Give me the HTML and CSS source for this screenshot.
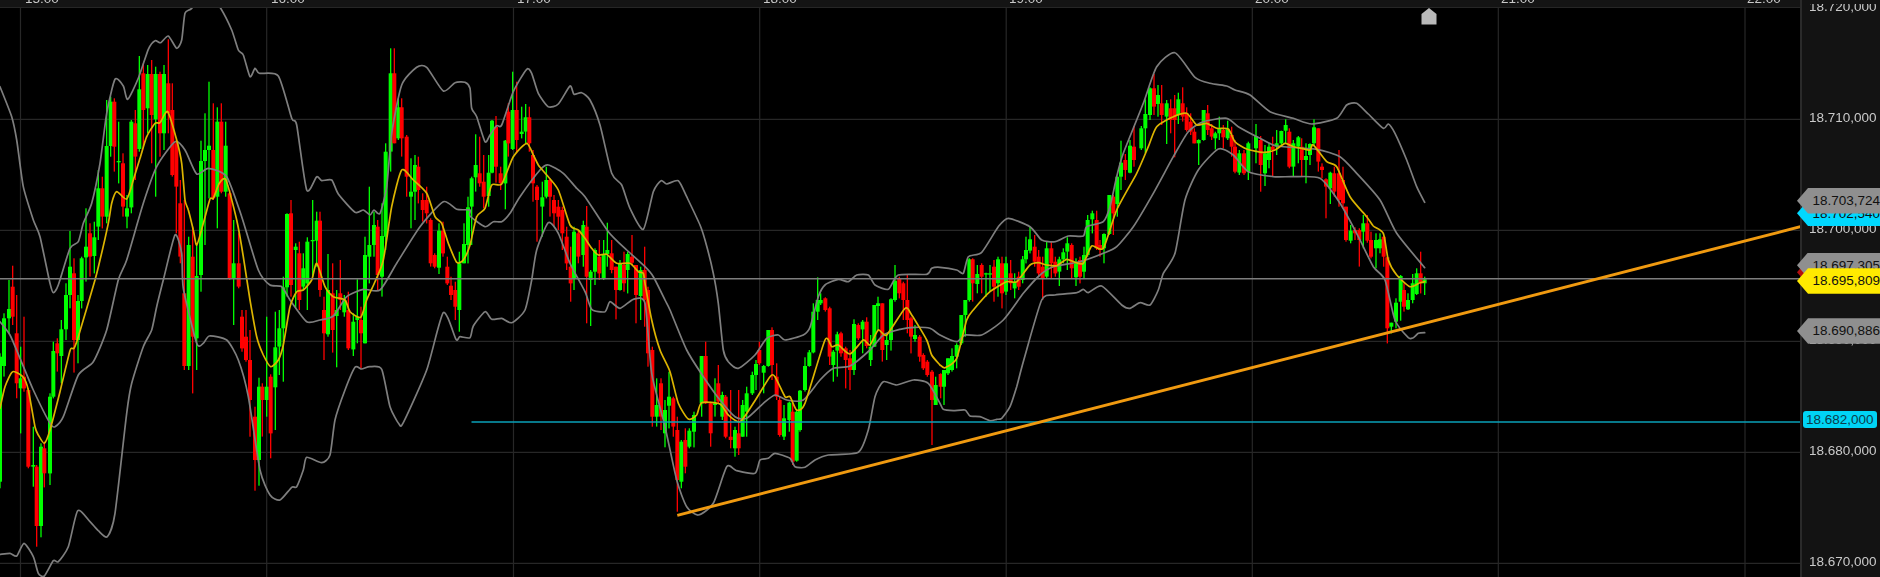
FILE: index.html
```html
<!DOCTYPE html>
<html lang="en">
<head>
<meta charset="utf-8">
<title>Chart</title>
<link rel="stylesheet" href="styles.css">
</head>
<body>
<main class="terminal">
  <section class="chart-pane">
    <div class="time-axis">
      <div class="time-row">
        <span class="time-label">15:00</span>
        <span class="time-label">16:00</span>
        <span class="time-label">17:00</span>
        <span class="time-label">18:00</span>
        <span class="time-label">19:00</span>
        <span class="time-label">20:00</span>
        <span class="time-label">21:00</span>
        <span class="time-label">22:00</span>
      </div>
    </div>
    <div class="plot">
      <svg id="chart" class="plot-svg" viewBox="0 8 1800 569" width="1800" height="569" aria-label="Candlestick chart"></svg>
      <svg class="session-marker" viewBox="0 0 16 17" width="16" height="17" aria-hidden="true"><path d="M8 0 L15.5 6 V16.5 H.5 V6 Z"/></svg>
    </div>
  </section>
  <aside class="price-axis">
    <div class="ticks">
      <div class="tick">18.720,000</div>
      <div class="tick">18.710,000</div>
      <div class="tick">18.700,000</div>
      <div class="tick">18.690,000</div>
      <div class="tick">18.680,000</div>
      <div class="tick">18.670,000</div>
    </div>
    <div class="axis-cap"></div>
    <div class="tag tag-red tag-at-red"></div>
    <div class="tag tag-cyan tag-at-cyan">18.702,540</div>
    <div class="tag tag-grey tag-at-a">18.703,724</div>
    <div class="tag tag-grey tag-at-b">18.697,305</div>
    <div class="tag tag-yellow tag-at-yellow">18.695,809</div>
    <div class="tag tag-grey tag-at-c">18.690,886</div>
    <div class="level-box">18.682,000</div>
  </aside>
</main>
<script src="chart.js"></script>
</body>
</html>
```
FILE: styles.css
```css
* { box-sizing: border-box; }
html, body { margin: 0; padding: 0; background: #000; }
body { width: 1880px; height: 577px; overflow: hidden; font-family: "Liberation Sans", Arial, sans-serif; }
.terminal { display: flex; width: 1880px; height: 577px; }
.chart-pane { width: 1800px; display: flex; flex-direction: column; }
.time-axis { height: 8px; background: #141414; border-bottom: 1px solid #262626; overflow: hidden; }
.time-row { display: flex; padding-left: 25px; margin-top: -9px; }
.time-label { flex: 0 0 246px; font-size: 13.5px; line-height: 15px; color: #c8c8c8; filter: blur(.35px); }
.plot { position: relative; flex: 1; background: #000; }
.plot-svg { display: block; filter: blur(.45px); }
.session-marker { position: absolute; left: 1420.5px; top: -.5px; fill: #b9b9b9; filter: blur(.35px); }
.price-axis { position: relative; width: 80px; background: #131313; border-left: 2px solid #2a2a2a; }
.ticks { display: flex; flex-direction: column; gap: 95px; padding-left: 7px; }
.tick { height: 16px; line-height: 14.5px; font-size: 13.5px; color: #cacaca; white-space: nowrap; filter: blur(.35px); }
.axis-cap { position: absolute; left: 0; right: 0; top: 0; height: 3.5px; background: #131313; }
.tag { position: absolute; left: -5px; width: 85px; height: 25.5px; line-height: 25.5px; padding-left: 15.5px; font-size: 13.5px; color: #111; white-space: nowrap; clip-path: polygon(0 50%, 11px 0, 100% 0, 100% 100%, 11px 100%); }
.tag-grey { background: #8f8f8f; }
.tag-cyan { background: #00d8ff; }
.tag-yellow { background: #ffea00; }
.tag-red { background: #b30f0f; }
.tag-at-red { top: 259.5px; }
.tag-at-cyan { top: 200.5px; }
.tag-at-a { top: 188px; }
.tag-at-b { top: 252.5px; }
.tag-at-yellow { top: 268.3px; }
.tag-at-c { top: 318.3px; }
.level-box { position: absolute; left: 1px; top: 410.7px; width: 73.5px; height: 17.6px; padding-left: 3px; line-height: 17.6px; font-size: 13.5px; color: #0b3d4c; background: #00d4f5; border-radius: 3px; white-space: nowrap; }
```
FILE: chart.js
```js
var NS = 'http://www.w3.org/2000/svg';
var svg = document.getElementById('chart');

function el(name, attrs) {
  var e = document.createElementNS(NS, name);
  for (var k in attrs) e.setAttribute(k, attrs[k]);
  svg.appendChild(e);
  return e;
}

/* Pixel traces: x offset, y offset (in 1/3 px), then x,y pairs in 1/3 px. */
function seg(dx, dy, a) {
  var out = [];
  for (var i = 0; i < a.length; i += 2) {
    out.push([dx + a[i] / 3, (a[i + 1] + dy) / 3]);
  }
  return out;
}
/* Smooth the traced points with a Catmull-Rom curve. */
function line(parts, colour, width) {
  var p = [];
  parts.forEach(function (s) { p = p.concat(seg(s[0], s[1], s[2])); });
  var d = 'M' + p[0][0].toFixed(1) + ' ' + p[0][1].toFixed(1);
  var t = 0.11;
  for (var i = 0; i < p.length - 1; i++) {
    var a = p[Math.max(i - 1, 0)], b = p[i], c = p[i + 1], e = p[Math.min(i + 2, p.length - 1)];
    d += 'C' + (b[0] + (c[0] - a[0]) * t).toFixed(1) + ' ' + (b[1] + (c[1] - a[1]) * t).toFixed(1) + ' ' +
      (c[0] - (e[0] - b[0]) * t).toFixed(1) + ' ' + (c[1] - (e[1] - b[1]) * t).toFixed(1) + ' ' +
      c[0].toFixed(1) + ' ' + c[1].toFixed(1);
  }
  el('path', { d: d, fill: 'none', stroke: colour, 'stroke-width': width, 'stroke-linejoin': 'round', 'stroke-linecap': 'round' });
}

/* grid */
[20.5, 266.7, 513.5, 759.7, 1006.2, 1252.3, 1498.3, 1745].forEach(function (x) {
  el('line', { x1: x, x2: x, y1: 8, y2: 577, stroke: '#272727', 'stroke-width': 1.2 });
});
[119.3, 230.3, 341.3, 452.3, 563.3].forEach(function (y) {
  el('line', { x1: 0, x2: 1800, y1: y, y2: y, stroke: '#272727', 'stroke-width': 1.2 });
});

/* candles: x type wickTop,bodyTop,bodyBottom,wickBottom */
var candles = [
[0, '0g1060,1070,1445,1465 12g940,955,1098,1130 27g840,927,955,1000 38r797,860,950,975 50r885,1000,1150,1195 62g1040,1135,1165,1300 72r950,1130,1165,1175 85r1165,1170,1400,1405 100g1280,1395,1400,1460 110r1395,1400,1578,1640 123g1330,1340,1578,1612 133r1325,1345,1420,1462 150g1180,1190,1420,1455 160g1025,1053,1190,1195 172r1015,1030,1060,1115 184g960,988,1068,1150 198g850,885,988,1020 210g693,800,885,925 222r775,820,1020,1118 234g885,903,1020,1090 245g770,775,903,925 258g625,740,772,845 270r670,700,770,830 283g665,712,768,820 295g510,565,680,720 307r530,565,650,685 320g300,438,650,670 332g290,305,438,470 343r295,305,440,515 356g365,483,487,550 369r460,490,620,650 381g585,625,650,685 394g360,365,622,640 406r330,370,470,540 418g168,268,447,455 430r190,220,330,440 443g195,222,325,400 455r180,222,345,490 467g200,222,358,590 480r215,222,400,470 492g195,222,400,450 505r118,250,340,400 517r250,330,525,530 529r425,430,560,700 541r540,610,770,790 553r600,880,1098,1110 566g710,735,1098,1110 578r680,770,1010,1180 590g735,828,1015,1110 603g422,483,825,875 615g340,450,483,735 627g245,437,450,595 640r310,450,595,600 652g322,365,590,685 664r310,365,575,580 677g365,437,575,590 689r570,580,835,840 701g660,790,835,975 716r700,790,860,865 726r930,950,1045,1055 738r930,1010,1080,1085 750r990,1080,1200,1310 765r1220,1250,1380,1472 777g1133,1160,1380,1457 787r1150,1160,1200,1310 800g950,1160,1200,1250 812r1123,1130,1300,1375 826g935,1042,1162,1290 838g930,985,1040,1125 850g830,862,985,1145 861g640,642,862,890 873r600,640,855,890 887g730,740,750,925 898r725,760,900,930 910g760,805,860,870 922g712,725,850,930 938g600,720,724,830 950g635,662,722,800 960r635,662,870,890 972r890,930,1000,1080 984g762,870,1003,1010 998r790,880,990,1058 1010g870,930,948,1102 1021r780,880,900,930 1033g885,900,937,950 1045r875,930,1045,1050 1060g940,965,1048,1068 1072g838,950,960,1030 1083r920,960,1000,1105 1095g710,765,1030,1030 1108g560,735,770,850 1122g635,675,735,770 1133r660,680,825,870 1146g610,708,830,890 1157g430,455,710,750 1172g145,220,455,515 1183r145,220,430,430 1195g295,322,415,420 1205r295,322,415,470 1220r405,410,530,590 1233g475,575,590,685 1245g465,495,575,660 1255r470,500,570,610 1268r580,600,630,665 1280r560,600,640,670 1292r655,660,790,800 1304r760,765,800,805 1317g670,692,803,822 1329r665,692,760,770 1342r770,800,850,855 1353r830,857,885,900 1366r845,870,920,960 1378g755,790,930,995 1392g670,732,790,790 1404g590,622,735,790'],
[470, '5g530,535,620,735 17g403,495,532,575 29r410,520,550,560 41r465,545,590,625 56g465,518,588,620 66g360,362,518,520 78r348,380,500,548 92r500,520,550,570 106g420,422,550,628 115r310,335,430,470 128g215,330,447,450 140r245,330,420,460 155g320,395,402,415 167g312,352,395,430 178r320,352,430,455 189r450,465,550,605 201r555,560,600,725 217g545,592,620,710 229g500,540,590,595 240r535,540,590,650 252r585,600,640,680 265r600,620,650,690 277r620,630,700,750 290r680,710,790,810 302r740,800,850,905 312g680,695,835,870 325r690,700,770,790 340g662,675,765,800 350r618,680,830,970 362g810,815,840,978 375g745,750,815,855 388r720,770,820,840 401g720,765,835,840 412g668,750,762,800 425r720,760,810,820 438r800,800,870,958 450g780,790,870,872 462r755,795,850,875 473g755,762,810,880 486r705,770,788,795 498r795,795,885,970 512g800,810,888,960 524r740,810,900,980 534r860,870,1060,1100 547r1040,1050,1250,1280 560g1135,1215,1250,1280 573r1135,1150,1250,1290 585g1200,1230,1300,1342 597g1115,1190,1217,1285 610r1190,1195,1280,1310 622r1250,1290,1440,1535 634g1320,1325,1445,1465 646r1285,1320,1400,1420 658g1285,1292,1340,1345 672g1235,1245,1295,1342 695g1068,1068,1210,1250 707r1025,1068,1210,1212 722r1205,1210,1300,1340 735g1135,1210,1215,1250 745r1095,1150,1205,1210 757g1175,1185,1250,1260 767r1185,1190,1310,1315 782r1170,1310,1320,1345 795g1280,1290,1345,1370 806r1170,1300,1345,1365 818g1200,1215,1310,1310 830g1160,1180,1235,1310 847g1115,1125,1180,1185 858g1080,1092,1125,1170 868r1025,1050,1090,1095 881g1095,1098,1118,1180 895g990,990,1098,1100 906r982,990,1095,1140 920r1090,1130,1190,1200 929r1190,1200,1305,1310 942g1215,1255,1310,1320 958g1205,1208,1260,1295 968r1210,1235,1385,1395 980g1230,1235,1382,1385 990g1170,1172,1290,1295 1005g1072,1098,1170,1175 1018g1050,1057,1098,1100 1030g910,935,1057,1060 1043g832,900,935,960 1052g880,900,910,915 1066r892,895,930,935 1079r920,925,1070,1095 1090g1050,1055,1095,1145 1102g995,1003,1052,1130 1113r995,1000,1060,1070 1127r1040,1045,1080,1165 1140r1050,1075,1110,1170 1152g958,972,1110,1125 1165r970,975,1015,1020 1178g960,965,988,1060 1190r952,965,1038,1045 1202g1005,1040,1080,1098 1213g915,915,1040,1040 1224g890,910,918,990 1237r910,910,1050,1085 1250g1000,1020,1035,1080 1263g895,898,1020,1052 1275g795,842,900,905 1288r830,835,880,895 1300r845,850,900,960 1312r825,900,960,1000 1323r950,955,1010,1060 1335g975,1005,1017,1025 1349r1005,1010,1070,1085 1360r1060,1065,1105,1110 1372r1080,1085,1125,1130 1386r1110,1115,1200,1335 1397g1130,1155,1215,1215'],
[940, '2r1120,1122,1160,1195 12g1110,1110,1160,1215 24g1075,1075,1120,1125 36g1045,1068,1110,1115 50g1030,1035,1070,1105 64g945,945,1030,1035 76g900,900,945,1010 88g775,778,900,905 98r775,778,850,905 112g795,822,852,880 125r790,795,830,880 138g818,820,822,890 150g795,820,824,875 162r780,800,860,905 174g770,778,850,890 186r770,790,880,925 198g770,790,875,885 212r780,820,850,870 224g820,848,865,895 236r815,830,860,870 248g768,778,840,850 258g710,750,778,790 270g680,718,752,760 284r705,740,785,800 296r750,770,820,830 308r770,800,835,900 320g725,745,830,835 334r725,745,790,835 346r770,785,820,830 358g770,778,815,858 370g745,757,778,790 382g712,730,755,810 395r730,735,805,835 408g775,790,832,858 420r770,780,830,850 432g740,765,815,835 443g645,660,765,770 457g632,640,658,700 470r632,660,745,750 480r720,735,750,770 492g700,702,745,790 508g585,585,702,705 520r585,590,640,705 532g530,530,612,650 543g422,488,530,570 556r462,480,510,540 570g420,437,518,520 582r378,440,480,500 604g378,385,445,450 616g298,342,385,460 630g262,265,345,360 642r222,265,320,345 654g255,285,312,350 665r255,310,345,375 680g300,310,350,432 692r298,325,360,400 704r285,325,360,472 715g278,298,345,372 728r262,310,350,365 740r322,340,390,395 752r340,365,395,405 763r385,395,430,430 776g418,420,430,495 791g330,330,420,422 803r315,340,390,405 815r372,385,410,420 826g395,400,415,448 838g350,385,400,420 850r375,390,412,445 863g362,388,415,420 875r380,405,440,470 885r420,440,515,520 898g450,460,518,525 912r450,460,520,525 925g425,430,515,540 948g372,408,445,490 962r408,420,495,575 975g435,460,520,558 987g430,440,480,505 998r410,440,450,530 1010g390,430,440,465 1024g392,393,430,440 1037g358,375,392,430 1048r385,395,500,505 1060g420,430,500,530 1075g408,412,440,490 1085r415,440,480,530 1098g430,468,480,550 1110g430,432,465,495 1122g358,382,430,435 1135r385,385,485,515 1146r490,500,510,535 1158r535,538,560,655 1171g515,518,565,612 1183r500,520,575,590 1197r450,520,600,620 1209r500,540,610,625 1218r620,620,720,725 1232g675,692,722,730 1245r682,690,700,720 1258r685,690,720,800 1270g645,670,695,745 1282r645,670,722,728 1293r695,720,770,775 1308g700,720,745,805 1320g700,718,745,760 1331r710,710,770,800 1342r770,772,985,1030 1354g968,968,980,1000 1368g895,908,965,985 1382g825,828,905,962 1392r850,870,920,935 1404g880,900,928,930 1418g822,850,900,910 1430g805,820,882,885 1442r755,820,850,880 1454g830,838,850,885']
];
candles.forEach(function (group) {
  group[1].split(' ').forEach(function (item) {
    var m = item.match(/^(\d+)([gr])(.*)$/);
    var v = m[3].split(',').map(function (n) { return +n / 3; });
    var x = group[0] + m[1] / 3;
    var colour = m[2] === 'g' ? '#00ff00' : '#ff0000';
    el('rect', { x: (x - 0.65).toFixed(2), y: v[0].toFixed(1), width: 1.3, height: (v[3] - v[0]).toFixed(1), fill: colour });
    el('rect', { x: (x - 2).toFixed(2), y: v[1].toFixed(1), width: 4, height: Math.max(v[2] - v[1], 1.2).toFixed(1), fill: colour });
  });
});

/* bollinger bands */
line([
  [0, 0, [0,260,35,350,50,420,70,560,100,660,120,710,150,850,160,878,175,855,210,745,235,725,250,670,275,610,300,490,320,340,345,238,370,258,383,298,415,235,445,148,465,122,482,128,505,108,530,145,545,120,555,40,575,25,620,-30,662,25,695,90,715,150,730,165,750,230,765,205,778,220,835,228,875,355,890,375,920,570,950,530,965,542,995,540,1015,582,1065,637,1090,630,1110,645,1122,630,1140,640,1160,560,1175,400,1205,255,1250,202,1280,202,1330,273,1365,248,1395,247,1410,265]],
  [470, 0, [5,325,20,350,45,425,60,405,80,377,95,375,130,275,170,208,185,220,205,280,235,320,265,312,300,258,312,283,335,278,360,300,390,375,425,520,455,555,480,625,520,688,550,575,573,542,590,552,625,542,650,590,690,675,705,720]],
  [470, 720, [730,100,745,190,760,330,775,365,805,385,855,345,890,295,925,285,945,300,1000,285,1020,262,1045,170,1065,135,1105,118,1135,125,1160,105,1195,105,1215,135,1255,148,1285,105,1370,103,1385,85,1410,82]],
  [940, 0, [50,810,70,820,85,770,125,757,175,680,205,655,270,680,305,720,345,725,385,708,430,708,440,680,490,665,510,620,530,530,550,460,610,310,650,200,705,158,765,232,810,250,860,258,885,270,930,285,990,335,1060,355,1115,372,1190,355,1220,315,1250,310,1285,342,1330,385,1345,372,1365,400,1400,480,1430,560,1454,607]]
], '#7e7e7e', 1.7);
line([
  [0, 840, [0,125,30,165,60,235,100,330,150,430,165,440,190,410,235,285,280,245,320,150,355,0]],
  [0, 0, [380,780,430,610,470,500,525,425,555,450,590,522,625,505,680,530,725,650,775,810,810,855,845,860,870,900]],
  [0, 840, [920,125,960,120,1000,108,1040,50,1090,28,1140,30]],
  [0, 0, [1190,790,1260,680,1330,605,1370,628,1410,630]],
  [470, 0, [0,648,45,680,70,665,95,665,120,640,150,590,210,510,235,495,280,520,320,565,345,590,415,695,470,750,525,800,550,830,585,900]],
  [470, 720, [600,210,650,330,700,410,750,480,795,530,830,535,880,490,915,465,950,480,1000,480,1050,420,1090,385,1140,378,1200,330,1240,285,1290,268,1335,262,1380,265,1410,285]],
  [940, 0, [50,1025,75,1005,125,1005,190,960,250,880,300,825,340,800,420,785,490,760,530,740,580,680,640,580,700,470,745,395,790,365,860,355,895,380,960,415,1010,438,1130,448,1200,470,1250,520,1320,600,1370,700,1454,803]]
], '#7e7e7e', 1.7);
line([
  [0, 840, [0,823,30,820,50,828,72,790,100,830,115,880,133,888,160,842,175,845,205,800,233,692,270,725,295,752,322,770,345,700,380,400,395,310,430,200,455,150,470,80,490,0]],
  [0, 0, [525,705,545,760]],
  [0, 840, [550,25,590,190,610,190,628,168,680,180,715,240,745,350,780,570,810,645,840,660,875,622,890,620,910,570,920,532,965,548,990,525,1005,420,1035,330,1065,262,1085,267,1110,260,1145,268,1170,380,1197,432,1210,428,1280,270,1330,98,1368,178,1380,170,1410,173]],
  [470, 720, [10,258,45,215,65,238,95,235,125,248,165,210,185,120,200,30]],
  [470, 0, [235,668,265,700,300,790,345,875]],
  [470, 720, [365,208,405,215,420,185,450,205,490,178,525,190,545,400,585,560,620,720,650,800,685,825,730,790,770,680,800,692,855,700,870,660,895,655,915,640,960,655,975,680,1005,682,1035,660,1075,645,1165,637,1195,570,1215,470,1240,425,1280,435,1330,420,1375,430,1410,490]],
  [880, 1080, [190,148,220,152,255,150,270,168,300,170,330,182,350,178,365,175,390,140,410,80,430,5]],
  [940, 0, [305,900,345,885,410,878,430,868,445,878,485,858,545,915,570,925,600,908,630,915,655,870,670,820,705,760,735,600,775,510,835,447,880,465,925,515,1000,530,1060,530,1140,535,1200,610,1255,710,1300,800,1335,840,1365,960,1405,1013,1420,1013,1435,1000,1454,998]]
], '#7e7e7e', 1.7);

/* moving average */
line([
  [0, 840, [0,385,15,320,38,275,70,292,85,330,105,440,115,465,133,490,150,450,180,335,210,212,222,205,235,170,285,0]],
  [0, 0, [300,780,325,670,335,610,350,575,380,597,400,540,420,475,440,410,465,370,480,368,503,335,530,420,545,490,555,600,565,630,580,690,590,735,610,670,630,597,640,595,658,550,678,540,710,660,730,770,750,900]],
  [0, 840, [770,170,790,225,812,260,835,240,850,195,870,80,890,35,910,30,935,0]],
  [0, 0, [950,790,975,860,1000,890]],
  [0, 840, [1035,60,1050,95,1082,112,1100,60,1125,5]],
  [0, 0, [1150,780,1175,620,1205,510,1240,540,1280,580,1305,650,1325,670,1345,730,1370,787,1390,780,1410,735]],
  [470, 0, [20,650,45,625,65,555,95,552,130,470,170,430,190,465,205,495,230,525,265,570,300,675,325,690,345,715,365,745,385,765,410,763,440,790,480,790,505,815,520,820]],
  [470, 720, [525,130,545,240,570,330,600,395,625,490,655,537,680,525,695,488,750,492,775,525,810,545,850,490,900,410,915,410,945,470,960,470,980,510,1005,490,1065,300,1085,320,1105,315,1140,342,1180,300,1200,315,1225,270,1250,285,1305,205,1325,225,1370,300,1385,345,1410,375]],
  [940, 0, [0,1095,15,1103,50,1075,80,960,100,930,150,875,200,845,230,845,270,795,295,788,320,795,350,797,380,778,405,787,430,790,455,738,490,745,530,630,590,520,625,440,650,380,700,350,740,340,770,375,800,370,830,385,865,387,885,425,920,447,970,457,1005,450,1035,430,1060,440,1085,445,1110,450,1120,435,1160,485,1190,500,1230,590,1280,650,1300,678,1330,700,1345,780,1370,825,1410,860,1440,848,1454,845]]
], '#dcb400', 1.7);

/* levels and trend line */
el('line', { x1: 0, x2: 1800, y1: 278.7, y2: 278.7, stroke: '#7e7e7e', 'stroke-width': 1.5 });
el('line', { x1: 471.5, x2: 1800, y1: 422, y2: 422, stroke: '#0aa0b8', 'stroke-width': 1.5 });
el('line', { x1: 677.3, x2: 1800.3, y1: 515.3, y2: 226.7, stroke: '#f09a10', 'stroke-width': 2.9 });
```
